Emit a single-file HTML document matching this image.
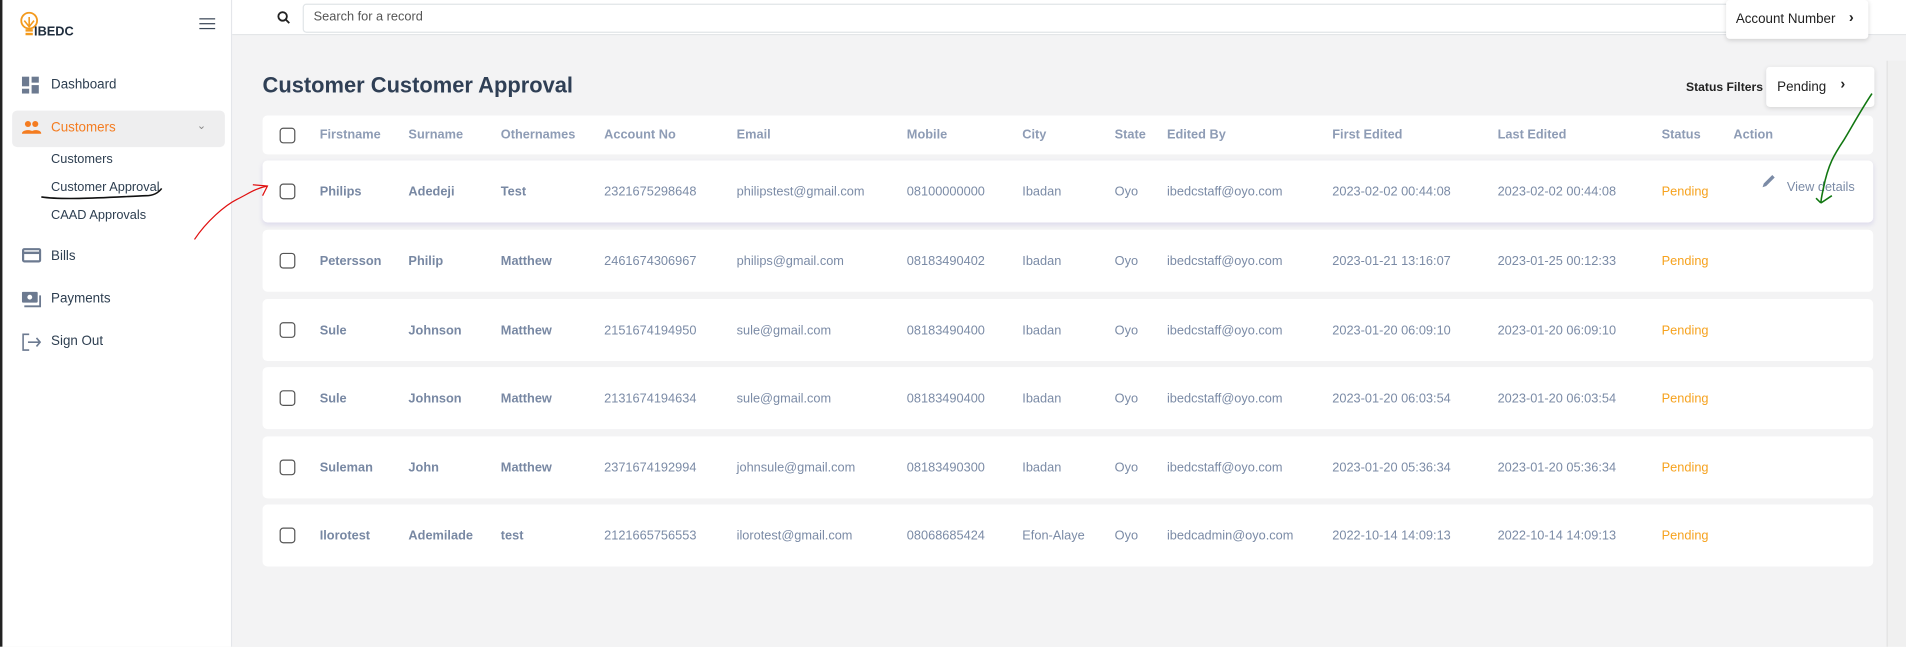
<!DOCTYPE html>
<html><head><meta charset="utf-8"><style>
*{box-sizing:border-box;margin:0;padding:0}
html,body{width:1906px;height:646px;overflow:hidden;background:#f3f3f4;font-family:"Liberation Sans",sans-serif}
#w{position:absolute;left:0;top:0;width:1568px;height:532px;transform:scale(1.21556);transform-origin:0 0;background:#f3f3f4}
.a{position:absolute;white-space:nowrap}
#side{position:absolute;left:0;top:0;width:191px;height:532px;background:#fff;border-right:1px solid #e4e6ea;border-left:2px solid #222}
#top{position:absolute;left:191px;top:0;width:1377px;height:29px;background:#fff;border-bottom:1px solid #e3e5e8}
.nav{position:absolute;left:40px;font-size:11px;color:#2d3e50}
.sub{position:absolute;left:40px;font-size:10.5px;color:#2d3e50}
.card{position:absolute;left:216px;width:1325px;background:#fff;border-radius:4px}
.cb{position:absolute;left:14px;width:13px;height:13px;border:1.5px solid #555;border-radius:3px}
.c{position:absolute;font-size:10.5px;color:#7b8ba6}
.b{font-weight:bold;color:#7888a3}
.h{font-weight:bold;color:#8e9cb5;font-size:10.5px}
.p{color:#f6a21e}
</style></head><body><div id="w">
<div id="side">
 <svg class="a" style="left:13px;top:9px" width="18" height="24" viewBox="0 0 18 24"><circle cx="9" cy="8" r="6.5" fill="none" stroke="#f39a1e" stroke-width="1.5"/><path d="M5 8l4 5 4-5M9 5v8" stroke="#f39a1e" stroke-width="1.3" fill="none"/><rect x="6" y="15" width="6" height="2" fill="#f39a1e"/><rect x="6" y="18" width="6" height="2" fill="#f39a1e"/></svg>
 <div class="a" style="left:26px;top:20px;font-size:10.5px;font-weight:bold;color:#1f2d3d">IBEDC</div>
 <div class="a" style="left:162px;top:15px;width:13px;height:1.3px;background:#3a4656;box-shadow:0 4px 0 #3a4656,0 8px 0 #3a4656"></div>
 <svg class="a" style="left:16px;top:63px" width="14" height="14"><rect x="0" y="0" width="6" height="8" fill="#6c7a90"/><rect x="8" y="0" width="6" height="5" fill="#6c7a90"/><rect x="0" y="10" width="6" height="4" fill="#6c7a90"/><rect x="8" y="7" width="6" height="7" fill="#6c7a90"/></svg>
 <div class="nav" style="top:64px">Dashboard</div>
 <div class="a" style="left:8px;top:91px;width:175px;height:30px;background:#eeeeef;border-radius:4px"></div>
 <svg class="a" style="left:16px;top:99px" width="16" height="12"><circle cx="5" cy="3" r="2.5" fill="#f47c20"/><circle cx="11" cy="3" r="2.5" fill="#f47c20"/><path d="M0 11c0-4 10-4 10 0zM7 11c0-4 9-4 9 0z" fill="#f47c20"/></svg>
 <div class="nav" style="top:99px;color:#f47c20">Customers</div>
 <div class="a" style="left:160px;top:98px;font-size:9px;color:#888">&#8964;</div>
 <div class="sub" style="top:125px">Customers</div>
 <div class="sub" style="top:148px">Customer Approval</div>
 <div class="sub" style="top:171px">CAAD Approvals</div>
 <svg class="a" style="left:16px;top:204px" width="16" height="12"><rect x="1" y="1" width="14" height="10" rx="1" fill="none" stroke="#6c7a90" stroke-width="1.8"/><rect x="1" y="3" width="14" height="2" fill="#6c7a90"/></svg>
 <div class="nav" style="top:205px">Bills</div>
 <svg class="a" style="left:16px;top:240px" width="16" height="14"><rect x="0" y="0" width="13" height="9" rx="1" fill="#6c7a90"/><circle cx="6.5" cy="4.5" r="2" fill="#fff"/><path d="M2 12h13V3" stroke="#6c7a90" stroke-width="1.5" fill="none"/></svg>
 <div class="nav" style="top:240px">Payments</div>
 <svg class="a" style="left:16px;top:274px" width="16" height="15"><path d="M6 1H1v13h5M5 7.5h10M12 4l3 3.5-3 3.5" stroke="#6c7a90" stroke-width="1.3" fill="none"/></svg>
 <div class="nav" style="top:275px">Sign Out</div>
</div>
<div id="top">
 <svg class="a" style="left:37px;top:9px" width="11" height="11"><circle cx="4.5" cy="4.5" r="3.5" fill="none" stroke="#222" stroke-width="1.5"/><path d="M7 7l3 3" stroke="#222" stroke-width="1.5"/></svg>
 <div class="a" style="left:58px;top:3px;width:1215px;height:24px;border:1px solid #e1e5e8;border-radius:3px"></div>
 <div class="a" style="left:67px;top:8px;font-size:10.5px;color:#555">Search for a record</div>
</div>
<div class="a" style="left:1420px;top:0;width:117px;height:32px;background:#fff;border-radius:3px;box-shadow:0 1px 4px rgba(0,0,0,.15)"></div>
<div class="a" style="left:1428px;top:10px;font-size:11px;color:#222">Account Number</div>
<div class="a" style="left:1521px;top:7px;font-size:12px;color:#222;font-weight:bold">&#8250;</div>
<div class="a" style="left:1552px;top:50px;width:16px;height:482px;background:#f0f0f0;border-left:1px solid #e2e2e2"></div>
<div class="a" style="left:216px;top:60px;font-size:18px;font-weight:bold;color:#2f3f55">Customer Customer Approval</div>
<div class="a" style="left:1387px;top:67px;font-size:10px;font-weight:bold;color:#222">Status Filters</div>
<div class="a" style="left:1453px;top:55px;width:89px;height:33px;background:#fff;border-radius:3px;box-shadow:0 1px 4px rgba(0,0,0,.12)"></div>
<div class="a" style="left:1462px;top:66px;font-size:11px;color:#222">Pending</div>
<div class="a" style="left:1514px;top:62px;font-size:12px;color:#222;font-weight:bold">&#8250;</div>

<div class="card" style="top:95px;height:32px">
 <div class="cb" style="top:10px"></div>
 <div class="c h" style="left:47px;top:10px">Firstname</div><div class="c h" style="left:120px;top:10px">Surname</div><div class="c h" style="left:196px;top:10px">Othernames</div><div class="c h" style="left:281px;top:10px">Account No</div><div class="c h" style="left:390px;top:10px">Email</div><div class="c h" style="left:530px;top:10px">Mobile</div><div class="c h" style="left:625px;top:10px">City</div><div class="c h" style="left:701px;top:10px">State</div><div class="c h" style="left:744px;top:10px">Edited By</div><div class="c h" style="left:880px;top:10px">First Edited</div><div class="c h" style="left:1016px;top:10px">Last Edited</div><div class="c h" style="left:1151px;top:10px">Status</div><div class="c h" style="left:1210px;top:10px">Action</div>
</div>

<div class="card" style="top:132px;height:51px;box-shadow:0 2px 4px rgba(120,110,200,.18)">
 <div class="cb" style="top:19px"></div>
 <div class="c b" style="left:47px;top:20px">Philips</div><div class="c b" style="left:120px;top:20px">Adedeji</div><div class="c b" style="left:196px;top:20px">Test</div><div class="c" style="left:281px;top:20px">2321675298648</div><div class="c" style="left:390px;top:20px">philipstest@gmail.com</div><div class="c" style="left:530px;top:20px">08100000000</div><div class="c" style="left:625px;top:20px">Ibadan</div><div class="c" style="left:701px;top:20px">Oyo</div><div class="c" style="left:744px;top:20px">ibedcstaff@oyo.com</div><div class="c" style="left:880px;top:20px">2023-02-02 00:44:08</div><div class="c" style="left:1016px;top:20px">2023-02-02 00:44:08</div><div class="c p" style="left:1151px;top:20px">Pending</div>
 <svg class="a" style="left:1233px;top:11px" width="12" height="12"><path d="M1 11l1-3 7-7 2 2-7 7z" fill="#7b8ba6"/></svg>
 <div class="c" style="left:1254px;top:16px">View details</div>
</div>

<div class="card" style="top:189px;height:51px"><div class="cb" style="top:19px"></div><div class="c b" style="left:47px;top:20px">Petersson</div><div class="c b" style="left:120px;top:20px">Philip</div><div class="c b" style="left:196px;top:20px">Matthew</div><div class="c" style="left:281px;top:20px">2461674306967</div><div class="c" style="left:390px;top:20px">philips@gmail.com</div><div class="c" style="left:530px;top:20px">08183490402</div><div class="c" style="left:625px;top:20px">Ibadan</div><div class="c" style="left:701px;top:20px">Oyo</div><div class="c" style="left:744px;top:20px">ibedcstaff@oyo.com</div><div class="c" style="left:880px;top:20px">2023-01-21 13:16:07</div><div class="c" style="left:1016px;top:20px">2023-01-25 00:12:33</div><div class="c p" style="left:1151px;top:20px">Pending</div></div>

<div class="card" style="top:246px;height:51px"><div class="cb" style="top:19px"></div><div class="c b" style="left:47px;top:20px">Sule</div><div class="c b" style="left:120px;top:20px">Johnson</div><div class="c b" style="left:196px;top:20px">Matthew</div><div class="c" style="left:281px;top:20px">2151674194950</div><div class="c" style="left:390px;top:20px">sule@gmail.com</div><div class="c" style="left:530px;top:20px">08183490400</div><div class="c" style="left:625px;top:20px">Ibadan</div><div class="c" style="left:701px;top:20px">Oyo</div><div class="c" style="left:744px;top:20px">ibedcstaff@oyo.com</div><div class="c" style="left:880px;top:20px">2023-01-20 06:09:10</div><div class="c" style="left:1016px;top:20px">2023-01-20 06:09:10</div><div class="c p" style="left:1151px;top:20px">Pending</div></div>

<div class="card" style="top:302px;height:51px"><div class="cb" style="top:19px"></div><div class="c b" style="left:47px;top:20px">Sule</div><div class="c b" style="left:120px;top:20px">Johnson</div><div class="c b" style="left:196px;top:20px">Matthew</div><div class="c" style="left:281px;top:20px">2131674194634</div><div class="c" style="left:390px;top:20px">sule@gmail.com</div><div class="c" style="left:530px;top:20px">08183490400</div><div class="c" style="left:625px;top:20px">Ibadan</div><div class="c" style="left:701px;top:20px">Oyo</div><div class="c" style="left:744px;top:20px">ibedcstaff@oyo.com</div><div class="c" style="left:880px;top:20px">2023-01-20 06:03:54</div><div class="c" style="left:1016px;top:20px">2023-01-20 06:03:54</div><div class="c p" style="left:1151px;top:20px">Pending</div></div>

<div class="card" style="top:359px;height:51px"><div class="cb" style="top:19px"></div><div class="c b" style="left:47px;top:20px">Suleman</div><div class="c b" style="left:120px;top:20px">John</div><div class="c b" style="left:196px;top:20px">Matthew</div><div class="c" style="left:281px;top:20px">2371674192994</div><div class="c" style="left:390px;top:20px">johnsule@gmail.com</div><div class="c" style="left:530px;top:20px">08183490300</div><div class="c" style="left:625px;top:20px">Ibadan</div><div class="c" style="left:701px;top:20px">Oyo</div><div class="c" style="left:744px;top:20px">ibedcstaff@oyo.com</div><div class="c" style="left:880px;top:20px">2023-01-20 05:36:34</div><div class="c" style="left:1016px;top:20px">2023-01-20 05:36:34</div><div class="c p" style="left:1151px;top:20px">Pending</div></div>

<div class="card" style="top:415px;height:51px"><div class="cb" style="top:19px"></div><div class="c b" style="left:47px;top:20px">Ilorotest</div><div class="c b" style="left:120px;top:20px">Ademilade</div><div class="c b" style="left:196px;top:20px">test</div><div class="c" style="left:281px;top:20px">2121665756553</div><div class="c" style="left:390px;top:20px">ilorotest@gmail.com</div><div class="c" style="left:530px;top:20px">08068685424</div><div class="c" style="left:625px;top:20px">Efon-Alaye</div><div class="c" style="left:701px;top:20px">Oyo</div><div class="c" style="left:744px;top:20px">ibedcadmin@oyo.com</div><div class="c" style="left:880px;top:20px">2022-10-14 14:09:13</div><div class="c" style="left:1016px;top:20px">2022-10-14 14:09:13</div><div class="c p" style="left:1151px;top:20px">Pending</div></div>

<svg class="a" style="left:0;top:0" width="1568" height="532">
 <path d="M34 162c20 3 60 0 86-1 6 0 10-2 13-6" stroke="#111" stroke-width="1.3" fill="none"/>
 <path d="M160 197c10-15 25-28 35-33 10-5 15-9 25-11M208 152l12 1-4 8" stroke="#e01010" stroke-width="1" fill="none"/>
 <path d="M1540 77c-10 15-18 30-23 38-8 12-13 20-17 40-1 5-2 9-2 12M1498 167l-4-4M1498 167l9-6" stroke="#117711" stroke-width="1.3" fill="none"/>
</svg>
</div></body></html>
